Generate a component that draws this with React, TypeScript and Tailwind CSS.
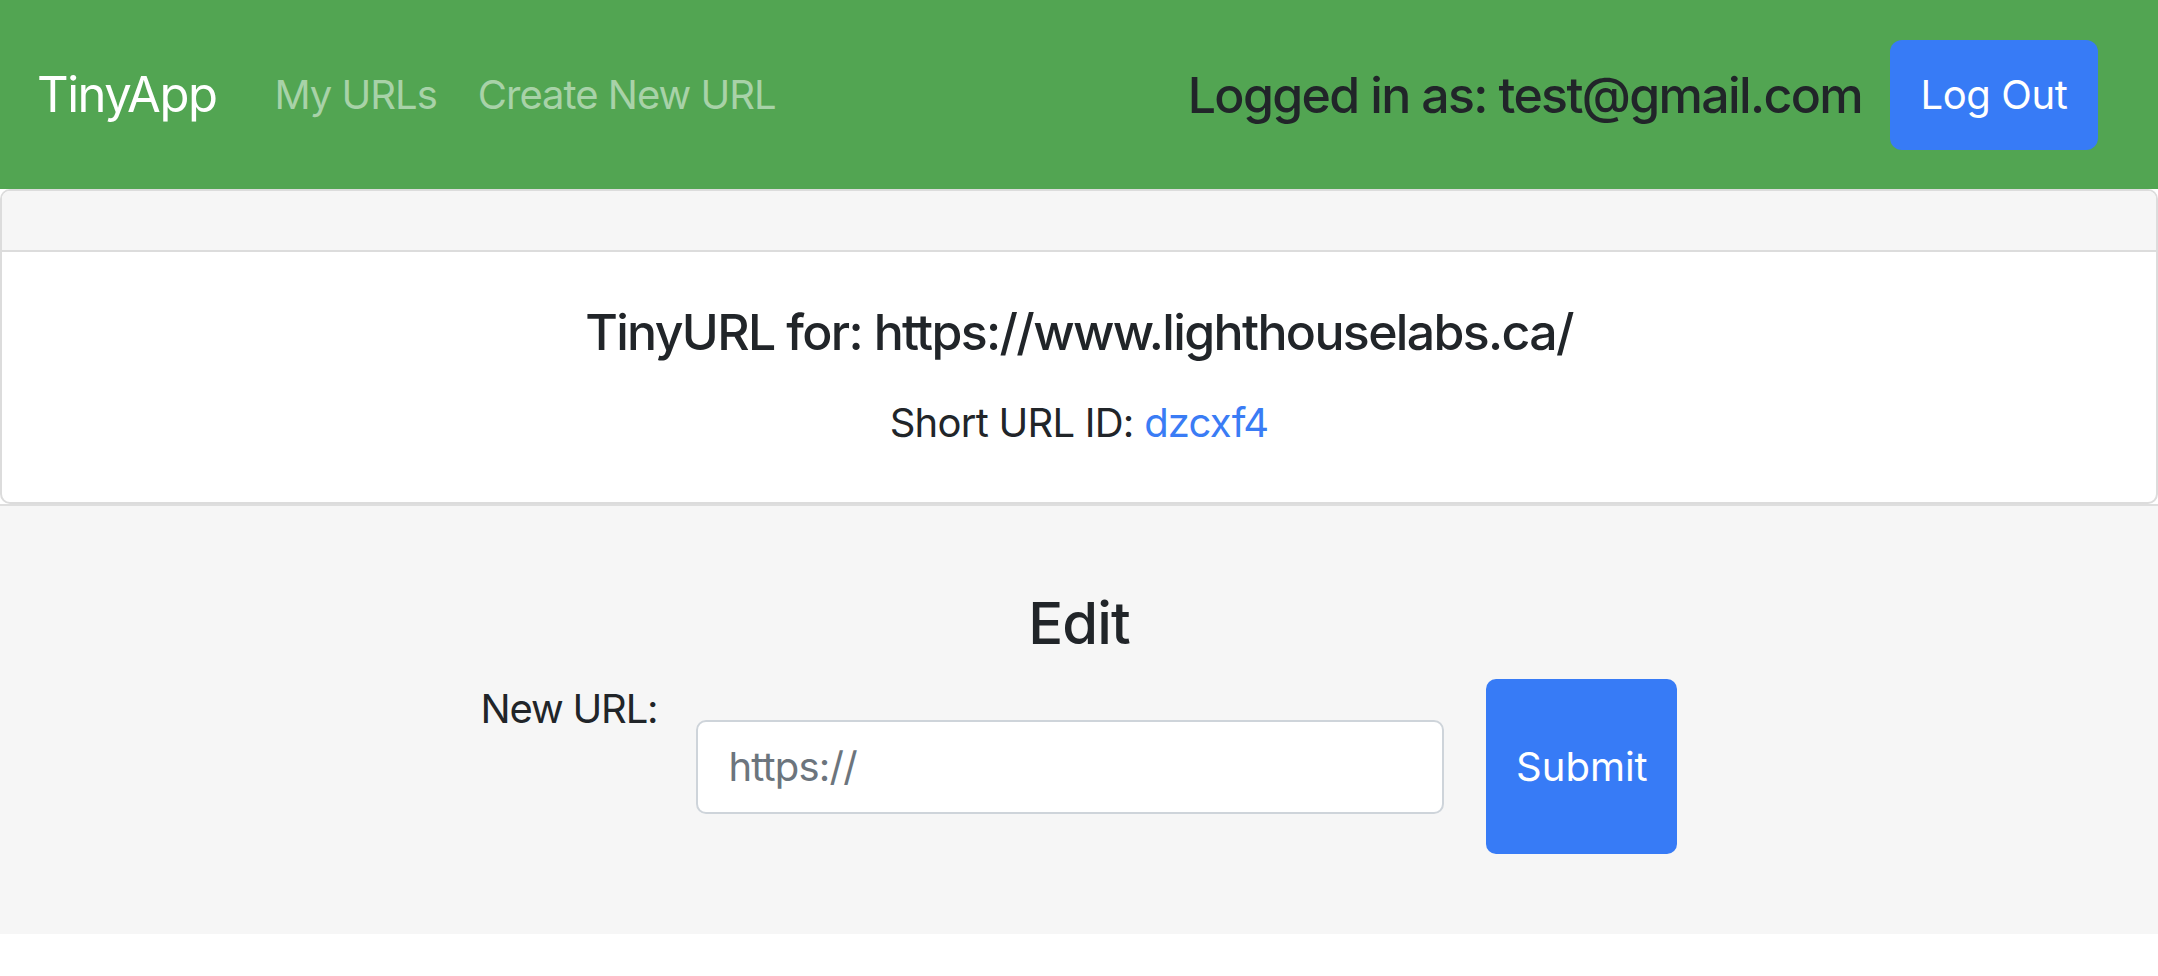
import React from "react";

const font = { fontFamily: "Inter, 'Noto Sans', sans-serif" };

export default function App() {
  return (
    <div className="min-h-screen w-full bg-white text-[#212529]" style={font}>
      {/* Navbar */}
      <nav className="flex h-[189px] items-center bg-[#52a552] pl-[37px] pr-[60px]">
        <a className="mr-[58px] text-[49px] leading-none tracking-[-0.03em] text-white">TinyApp</a>
        <div className="flex items-center gap-[41px]">
          <a className="text-[40px] leading-none tracking-[-0.025em] text-[#a8d2a8]">My URLs</a>
          <a className="text-[40px] leading-none tracking-[-0.025em] text-[#a8d2a8]">Create New URL</a>
        </div>
        <div className="ml-auto flex items-center gap-[28px]">
          <span className="text-[50px] font-medium leading-none tracking-[-0.033em] text-[#212529]">
            Logged in as: test@gmail.com
          </span>
          <button className="flex h-[110px] w-[208px] items-center justify-center rounded-[12px] bg-[#377bf6] text-[40px] tracking-[-0.01em] text-white">
            Log Out
          </button>
        </div>
      </nav>

      {/* Card */}
      <div className="rounded-[10px] border-2 border-[#dcdcdc] bg-white">
        <div className="h-[61px] rounded-t-[8px] border-b-2 border-[#dcdcdc] bg-[#f6f6f6]" />
        <div className="flex flex-col items-center pb-[49px] pt-[50px]">
          <h5 className="text-[50px] font-medium leading-[60px] tracking-[-0.033em]">
            TinyURL for: https://www.lighthouselabs.ca/
          </h5>
          <p className="mt-[31px] text-[40px] leading-[60px] tracking-[-0.019em]">
            Short URL ID: <a className="text-[#3a7cf5]">dzcxf4</a>
          </p>
        </div>
      </div>

      {/* Edit section */}
      <div className="border-t-2 border-[#dedede] bg-[#f6f6f6] pb-[80px] pt-[81px]">
        <h4 className="text-center text-[58px] font-medium leading-[72px] tracking-[-0.015em]">Edit</h4>
        <form className="mt-[20px] flex items-center justify-center">
          <label className="mr-[39px] self-start text-[40px] leading-[60px] tracking-[-0.03em]">New URL:</label>
          <input
            className="h-[94px] w-[748px] rounded-[10px] border-2 border-[#ced4da] bg-white px-[30px] text-[40px] tracking-[-0.02em] outline-none placeholder:text-[#6c757d]"
            placeholder="https://"
          />
          <button
            type="button"
            className="ml-[42px] flex h-[175px] w-[191px] items-center justify-center rounded-[10px] bg-[#377bf6] text-[40px] text-white"
          >
            Submit
          </button>
        </form>
      </div>
    </div>
  );
}
